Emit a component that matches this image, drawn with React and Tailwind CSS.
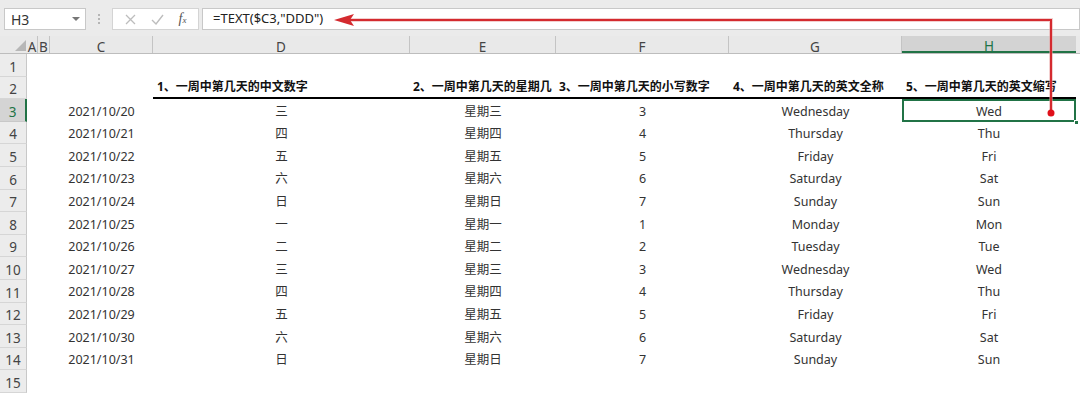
import React from "react";

const dates = ["2021/10/20","2021/10/21","2021/10/22","2021/10/23","2021/10/24","2021/10/25","2021/10/26","2021/10/27","2021/10/28","2021/10/29","2021/10/30","2021/10/31"];
const cn = ["三","四","五","六","日","一","二","三","四","五","六","日"];
const nums = ["3","4","5","6","7","1","2","3","4","5","6","7"];
const full = ["Wednesday","Thursday","Friday","Saturday","Sunday","Monday","Tuesday","Wednesday","Thursday","Friday","Saturday","Sunday"];
const abbr = ["Wed","Thu","Fri","Sat","Sun","Mon","Tue","Wed","Thu","Fri","Sat","Sun"];

const headers = [
  { l: "A", w: "w-[11px]" },
  { l: "B", w: "w-[12px]" },
  { l: "C", w: "w-[103px]" },
  { l: "D", w: "w-[257px]" },
  { l: "E", w: "w-[146px]" },
  { l: "F", w: "w-[173px]" },
  { l: "G", w: "w-[173px]" },
  { l: "H", w: "w-[174px]" },
];

function RowHead({ n, sel }) {
  return (
    <div
      className={
        sel
          ? "w-[27px] h-full shrink-0 flex items-center justify-center bg-[#d4d4d4] border-r-2 border-r-[#217346] border-b border-b-[#c8c8c8] text-[#217346] text-[13.5px] pt-[4px]"
          : "w-[27px] h-full shrink-0 flex items-center justify-center bg-[#ececec] border-r border-r-[#c8c8c8] border-b border-b-[#d6d6d6] text-[#444] text-[13.5px] pt-[4px]"
      }
    >
      {n}
    </div>
  );
}

function Cell({ w, children }) {
  return (
    <div className={`${w} h-full shrink-0 flex items-center justify-center pt-[3px] text-[12.5px] text-[#333]`}>
      {children}
    </div>
  );
}

export default function App() {
  return (
    <div className="relative w-[1080px] h-[394px] overflow-hidden bg-white font-['Noto_Sans','Noto_Sans_CJK_SC',sans-serif]">
      {/* formula bar */}
      <div className="h-[36px] bg-[#ebebeb] flex items-start pt-[8px] pl-[4px]">
        <div className="w-[82px] h-[22px] bg-white border border-[#c8c8c8] flex items-center justify-between pl-[6px] pr-[5px] text-[14px] text-[#333]">
          <span>H3</span>
          <svg width="8" height="5" viewBox="0 0 8 5"><path d="M0 0 L8 0 L4 4 Z" fill="#777" /></svg>
        </div>
        <div className="w-[26px] h-[22px] flex flex-col items-center justify-center gap-[2px]">
          <div className="w-[2px] h-[2px] bg-[#b5b5b5]" />
          <div className="w-[2px] h-[2px] bg-[#b5b5b5]" />
          <div className="w-[2px] h-[2px] bg-[#b5b5b5]" />
        </div>
        <div className="w-[87px] h-[22px] bg-white border border-[#d4d4d4] flex items-center justify-around px-[4px]">
          <svg width="11" height="11" viewBox="0 0 11 11"><path d="M1 1 L10 10 M10 1 L1 10" stroke="#bdbdbd" strokeWidth="1.3" /></svg>
          <svg width="13" height="11" viewBox="0 0 13 11"><path d="M1 6 L5 10 L12 1" stroke="#bdbdbd" strokeWidth="1.4" fill="none" /></svg>
          <span className="font-['Liberation_Serif',serif] italic text-[14px] text-[#555] leading-none">f<span className="text-[9px]">x</span></span>
        </div>
        <div className="ml-[3px] flex-1 h-[22px] bg-white border border-[#c8c8c8] flex items-center pl-[10px] text-[13px] text-[#222]">
          =TEXT($C3,"DDD")
        </div>
      </div>

      {/* column headers */}
      <div className="h-[18px] flex bg-[#e9e9e9] border-b border-[#bdbdbd]">
        <div className="w-[27px] shrink-0 flex items-end justify-end pr-[1px] pb-[2px]">
          <svg width="11" height="11" viewBox="0 0 11 11"><path d="M11 0 L11 11 L0 11 Z" fill="#b7b7b7" /></svg>
        </div>
        {headers.map((h, i) => (
          <div
            key={i}
            className={
              h.l === "H"
                ? `${h.w} shrink-0 flex items-center justify-center pt-[6px] text-[13.5px] leading-none text-[#217346] bg-[#d3d3d3] border-b-2 border-[#217346]`
                : `${h.w} shrink-0 flex items-center justify-center pt-[6px] text-[13.5px] leading-none text-[#444] border-r border-[#c4c4c4]`
            }
          >
            {h.l}
          </div>
        ))}
        <div className="flex-1" />
      </div>

      {/* row 1 */}
      <div className="h-[22.6px] flex">
        <RowHead n={1} />
      </div>
      {/* row 2 */}
      <div className="h-[22.6px] flex">
        <RowHead n={2} />
        <div className="w-[126px] shrink-0" />
        <div className="w-[257px] shrink-0 h-full flex items-end pl-[4px] pb-[1px] border-b-2 border-black text-[12px] font-bold text-[#111]">1、一周中第几天的中文数字</div>
        <div className="w-[146px] shrink-0 h-full flex items-end pl-[3px] pb-[1px] border-b-2 border-black text-[12px] font-bold text-[#111] whitespace-nowrap">2、一周中第几天的星期几</div>
        <div className="w-[173px] shrink-0 h-full flex items-end pl-[3px] pb-[1px] border-b-2 border-black text-[12px] font-bold text-[#111] whitespace-nowrap">3、一周中第几天的小写数字</div>
        <div className="w-[173px] shrink-0 h-full flex items-end pl-[4px] pb-[1px] border-b-2 border-black text-[12px] font-bold text-[#111] whitespace-nowrap">4、一周中第几天的英文全称</div>
        <div className="w-[174px] shrink-0 h-full flex items-end pl-[4px] pb-[1px] border-b-2 border-black text-[12px] font-bold text-[#111] whitespace-nowrap">5、一周中第几天的英文缩写</div>
      </div>

      {dates.map((d, i) => (
        <div key={d} className="h-[22.6px] flex">
          <RowHead n={i + 3} sel={i === 0} />
          <div className="w-[23px] shrink-0" />
          <Cell w="w-[103px]">{d}</Cell>
          <Cell w="w-[257px]">{cn[i]}</Cell>
          <Cell w="w-[146px]">星期{cn[i]}</Cell>
          <Cell w="w-[173px]">{nums[i]}</Cell>
          <Cell w="w-[173px]">{full[i]}</Cell>
          <div className="relative w-[174px] h-full shrink-0 flex items-center justify-center pt-[3px] text-[12.5px] text-[#333]">
            {abbr[i]}
            {i === 0 && (
              <>
                <div className="absolute left-0 right-0 top-0 bottom-0 border-2 border-[#217346]" />
                <div className="absolute right-[-3px] bottom-[-3px] w-[5px] h-[5px] bg-[#217346] border border-white" />
              </>
            )}
          </div>
        </div>
      ))}

      <div className="h-[22.6px] flex">
        <RowHead n={15} />
      </div>

      {/* red arrow overlay */}
      <svg className="absolute left-0 top-0 pointer-events-none" width="1080" height="394" viewBox="0 0 1080 394">
        <path d="M350 20 L1051 20 L1051 113" stroke="#e8a0a0" strokeWidth="4" fill="none" opacity="0.5" />
        <path d="M350 20 L1051 20 L1051 113" stroke="#d42a2f" strokeWidth="2" fill="none" />
        <path d="M334 20 L354 14 L350 20 L354 26 Z" fill="#d42a2f" />
        <circle cx="1051" cy="113" r="3.5" fill="#e0101a" />
      </svg>
    </div>
  );
}
